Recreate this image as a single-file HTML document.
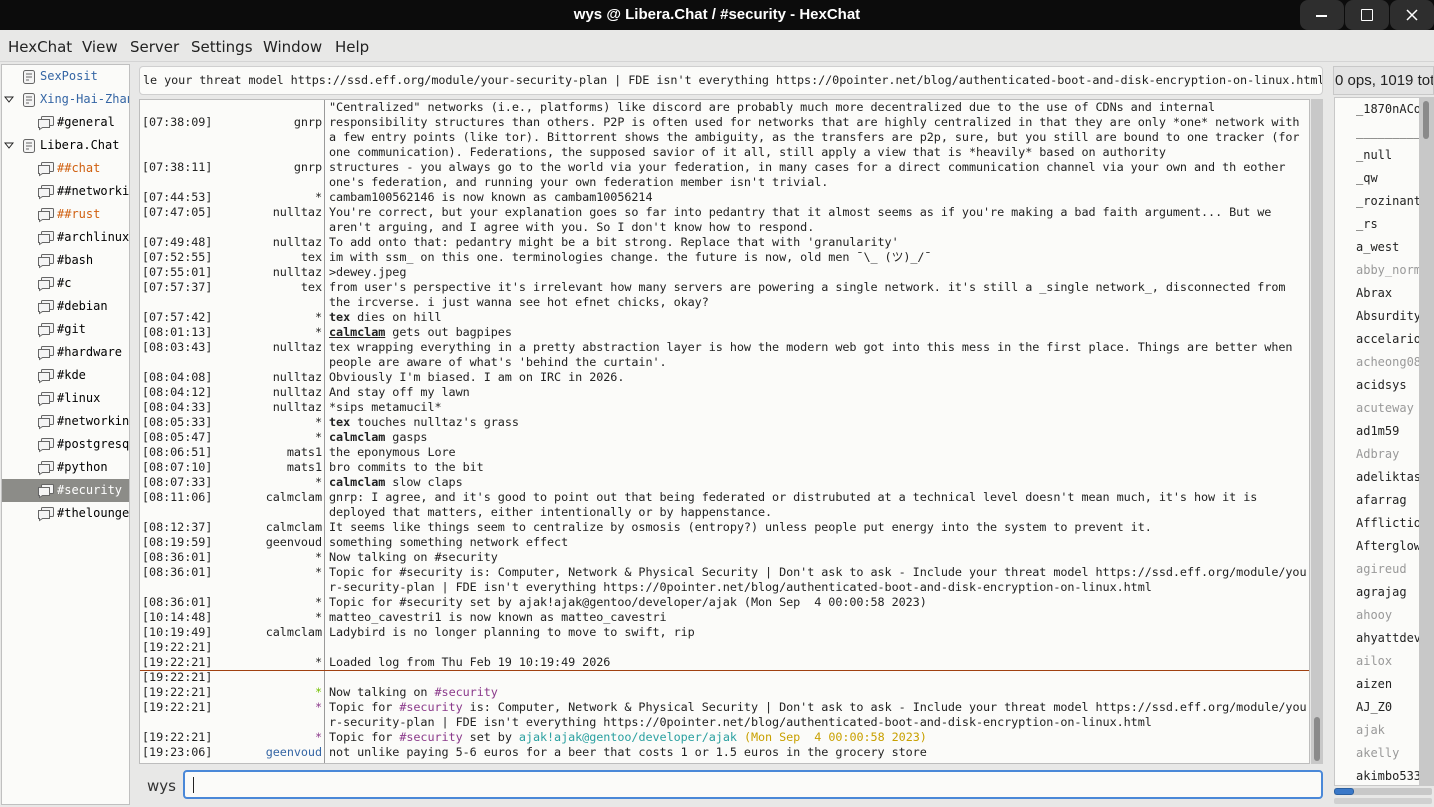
<!DOCTYPE html>
<html><head><meta charset="utf-8">
<style>
*{box-sizing:border-box;margin:0;padding:0}
body{width:1434px;height:807px;overflow:hidden;background:#e8e8e7;font-family:"DejaVu Sans","Liberation Sans",sans-serif;position:relative}
.title{position:absolute;left:0;top:0;width:1434px;height:30px;background:#0c0c0c;color:#fff;font-weight:bold;font-size:15px;text-align:center;line-height:30px;font-family:"Liberation Sans",sans-serif}
.wb{position:absolute;top:0;width:44px;height:30px;background:#2e2e2e;border-radius:8px}
.menu{position:absolute;top:30px;left:0;width:1434px;height:32px;font-size:15px;color:#222;border-bottom:1px solid #d4d4d4}
.menu span{position:absolute;top:8px}
.tree{position:absolute;left:1px;top:64px;width:129px;height:741px;background:#fbfbf9;border:1px solid #c0c0c0;font-size:12.5px;overflow:hidden}
.ti{position:absolute;height:23px;line-height:23px;white-space:nowrap;font-family:"DejaVu Sans Mono",monospace;font-size:12px}
.ti svg{position:absolute;top:4px}
.topic{position:absolute;left:139px;top:66px;width:1184px;height:29px;background:#fbfbf9;border:1px solid #cfcfcf;border-radius:4px;font-family:"DejaVu Sans Mono",monospace;font-size:11.8px;letter-spacing:-0.07px;line-height:27px;padding-left:3px;white-space:pre;overflow:hidden;color:#222}
.chat{position:absolute;left:139px;top:99px;width:1171px;height:665px;background:#fbfbf9;border:1px solid #bdbdbd;overflow:hidden;font-family:"DejaVu Sans Mono",monospace;font-size:11.8px;letter-spacing:-0.07px;color:#222}
.sep{position:absolute;left:184px;top:0;width:1px;height:665px;background:#9a9a9a}
.r{position:absolute;left:0;height:15px;line-height:15px;width:1170px;white-space:pre}
.r .t{position:absolute;left:2px}
.r .n{position:absolute;right:988px;text-align:right}
.r .m{position:absolute;left:189px}
.vs{position:absolute;left:1311px;top:99px;width:12px;height:665px;background:#c8c8c8}
.vs i{position:absolute;left:3px;top:618px;width:6px;height:44px;background:#8a8a8a;border-radius:3px}
.ops{position:absolute;left:1333px;top:66px;width:101px;height:29px;border:1px solid #c8c8c8;background:#e3e3e3;font-size:15px;line-height:27px;padding-left:1px;white-space:nowrap;overflow:hidden;color:#222;font-family:"Liberation Sans",sans-serif}
.nl{position:absolute;left:1334px;top:97px;width:86px;height:689px;background:#fbfbf9;border:1px solid #c8c8c8;overflow:hidden;font-family:"DejaVu Sans Mono",monospace;font-size:12px}
.nl div{position:absolute;left:21px;height:23px;line-height:23px;white-space:nowrap;color:#222}
.nl .g{color:#999}
.ns{position:absolute;left:1420px;top:97px;width:14px;height:689px;background:#c8c8c8}
.ns i{position:absolute;left:3px;top:4px;width:6px;height:38px;background:#8a8a8a;border-radius:3px}
.hs{position:absolute;left:1334px;top:788px;width:98px;height:7px;background:#c8c8c8;border-radius:2px}
.hs i{position:absolute;left:0;top:0;width:20px;height:7px;background:#3a78c8;border-radius:3px;border:1px solid #2a5fa0}
.hs2{position:absolute;left:1334px;top:798px;width:98px;height:6px;background:#d0d0d0;border-radius:2px}
.wys{position:absolute;left:147px;top:777px;font-size:15px;color:#333}
.inp{position:absolute;left:183px;top:770px;width:1140px;height:29px;background:#fbfbf9;border:2px solid #4a88d8;border-radius:4px}
.inp i{position:absolute;left:8px;top:5px;width:1px;height:16px;background:#222}
b{font-weight:bold}
.p{color:#8b3a8b}.tl{color:#2aa0a0}.gd{color:#c8a000}.gr{color:#73c000}.bl{color:#3465a4}
</style></head><body>
<div class="title">wys @ Libera.Chat / #security - HexChat</div>
<div class="wb" style="left:1300px"><div style="position:absolute;left:16px;top:15px;width:11px;height:1.5px;background:#fff"></div></div>
<div class="wb" style="left:1345px"><div style="position:absolute;left:16px;top:9px;width:12px;height:12px;border:1.5px solid #fff;border-radius:1px"></div></div>
<div class="wb" style="left:1390px"><svg style="position:absolute;left:15px;top:8px" width="14" height="14"><path d="M2 2L12 12M12 2L2 12" stroke="#fff" stroke-width="1.5"/></svg></div>
<div class="menu"><span style="left:8px">HexChat</span><span style="left:82px">View</span><span style="left:130px">Server</span><span style="left:191px">Settings</span><span style="left:263px">Window</span><span style="left:335px">Help</span></div>

<div class="tree">
<div class="ti" style="left:0;top:0"><svg style="left:20px" width="14" height="16"><rect x="1.5" y="1.5" width="11" height="13" rx="2" fill="#f4f4f4" stroke="#666"/><path d="M4 5h6M4 8h6M4 11h3" stroke="#666"/></svg><span style="position:absolute;left:38px;color:#3465a4">SexPosit</span></div>
<div class="ti" style="left:0;top:23px"><svg style="left:2px;top:8px" width="10" height="7"><path d="M1 1L9 1L5 6Z" fill="none" stroke="#222"/></svg><svg style="left:20px" width="14" height="16"><rect x="1.5" y="1.5" width="11" height="13" rx="2" fill="#f4f4f4" stroke="#666"/><path d="M4 5h6M4 8h6M4 11h3" stroke="#666"/></svg><span style="position:absolute;left:38px;color:#3465a4">Xing-Hai-Zhang</span></div>
<div class="ti" style="left:0;top:46px"><svg style="left:35px" width="18" height="16"><rect x="4.5" y="1.5" width="12" height="9" rx="1" fill="#f4f4f4" stroke="#666"/><path d="M1.5 4.5h11v8h-7l-3 2v-2h-1z" fill="#f4f4f4" stroke="#666"/></svg><span style="position:absolute;left:55px">#general</span></div>
<div class="ti" style="left:0;top:69px"><svg style="left:2px;top:8px" width="10" height="7"><path d="M1 1L9 1L5 6Z" fill="none" stroke="#222"/></svg><svg style="left:20px" width="14" height="16"><rect x="1.5" y="1.5" width="11" height="13" rx="2" fill="#f4f4f4" stroke="#666"/><path d="M4 5h6M4 8h6M4 11h3" stroke="#666"/></svg><span style="position:absolute;left:38px">Libera.Chat</span></div>
<div id="chans"></div>
</div>

<div class="topic">le your threat model https://ssd.eff.org/module/your-security-plan | FDE isn't everything https://0pointer.net/blog/authenticated-boot-and-disk-encryption-on-linux.html</div>

<div class="chat">
<div class="sep"></div>
<div id="rows"></div>
<div style="position:absolute;left:0;top:570px;width:1171px;height:1px;background:#a04010"></div>
</div>
<div class="vs"><i></i></div>

<div class="ops">0 ops, 1019 total</div>
<div class="nl" id="nl"></div>
<div class="ns"><i></i></div>
<div class="hs"><i></i></div>
<div class="hs2"></div>

<div class="wys">wys</div>
<div class="inp"><i></i></div>

<script>
var chans=[["##chat","#d06010"],["##networking",""],["##rust","#d06010"],["#archlinux",""],["#bash",""],["#c",""],["#debian",""],["#git",""],["#hardware",""],["#kde",""],["#linux",""],["#networking",""],["#postgresql",""],["#python",""],["#security","sel"],["#thelounge",""]];
var h="";
chans.forEach(function(c,i){var top=92+i*23;var sel=c[1]=="sel";
h+='<div class="ti" style="left:0;top:'+top+'px;width:127px;'+(sel?'background:#8c8c88;color:#fff;':'')+'"><svg style="left:35px" width="18" height="16"><rect x="4.5" y="1.5" width="12" height="9" rx="1" fill="#f4f4f4" stroke="#666"/><path d="M1.5 4.5h11v8h-7l-3 2v-2h-1z" fill="#f4f4f4" stroke="#666"/></svg><span style="position:absolute;left:55px;'+(c[1]&&!sel?'color:'+c[1]:'')+'">'+c[0]+'</span></div>';});
document.getElementById('chans').innerHTML=h;
function e(s){return s.replace(/&/g,'&amp;').replace(/</g,'&lt;').replace(/>/g,'&gt;');}
var R=[
["","",'"Centralized" networks (i.e., platforms) like discord are probably much more decentralized due to the use of CDNs and internal'],
["[07:38:09]","gnrp","responsibility structures than others. P2P is often used for networks that are highly centralized in that they are only *one* network with"],
["","","a few entry points (like tor). Bittorrent shows the ambiguity, as the transfers are p2p, sure, but you still are bound to one tracker (for"],
["","","one communication). Federations, the supposed savior of it all, still apply a view that is *heavily* based on authority"],
["[07:38:11]","gnrp","structures - you always go to the world via your federation, in many cases for a direct communication channel via your own and th eother"],
["","","one's federation, and running your own federation member isn't trivial."],
["[07:44:53]","*","cambam100562146 is now known as cambam10056214"],
["[07:47:05]","nulltaz","You're correct, but your explanation goes so far into pedantry that it almost seems as if you're making a bad faith argument... But we"],
["","","aren't arguing, and I agree with you. So I don't know how to respond."],
["[07:49:48]","nulltaz","To add onto that: pedantry might be a bit strong. Replace that with 'granularity'"],
["[07:52:55]","tex","im with ssm_ on this one. terminologies change. the future is now, old men ¯\\_ (ツ)_/¯"],
["[07:55:01]","nulltaz",">dewey.jpeg"],
["[07:57:37]","tex","from user's perspective it's irrelevant how many servers are powering a single network. it's still a _single network_, disconnected from"],
["","","the ircverse. i just wanna see hot efnet chicks, okay?"],
["[07:57:42]","*","<b>tex</b> dies on hill",1],
["[08:01:13]","*","<b><u>calmclam</u></b> gets out bagpipes",1],
["[08:03:43]","nulltaz","tex wrapping everything in a pretty abstraction layer is how the modern web got into this mess in the first place. Things are better when"],
["","","people are aware of what's 'behind the curtain'."],
["[08:04:08]","nulltaz","Obviously I'm biased. I am on IRC in 2026."],
["[08:04:12]","nulltaz","And stay off my lawn"],
["[08:04:33]","nulltaz","*sips metamucil*"],
["[08:05:33]","*","<b>tex</b> touches nulltaz's grass",1],
["[08:05:47]","*","<b>calmclam</b> gasps",1],
["[08:06:51]","mats1","the eponymous Lore"],
["[08:07:10]","mats1","bro commits to the bit"],
["[08:07:33]","*","<b>calmclam</b> slow claps",1],
["[08:11:06]","calmclam","gnrp: I agree, and it's good to point out that being federated or distrubuted at a technical level doesn't mean much, it's how it is"],
["","","deployed that matters, either intentionally or by happenstance."],
["[08:12:37]","calmclam","It seems like things seem to centralize by osmosis (entropy?) unless people put energy into the system to prevent it."],
["[08:19:59]","geenvoud","something something network effect"],
["[08:36:01]","*","Now talking on #security"],
["[08:36:01]","*","Topic for #security is: Computer, Network &amp; Physical Security | Don't ask to ask - Include your threat model https://ssd.eff.org/module/you",1],
["","","r-security-plan | FDE isn't everything https://0pointer.net/blog/authenticated-boot-and-disk-encryption-on-linux.html"],
["[08:36:01]","*","Topic for #security set by ajak!ajak@gentoo/developer/ajak (Mon Sep  4 00:00:58 2023)"],
["[10:14:48]","*","matteo_cavestri1 is now known as matteo_cavestri"],
["[10:19:49]","calmclam","Ladybird is no longer planning to move to swift, rip"],
["[19:22:21]","",""],
["[19:22:21]","*","Loaded log from Thu Feb 19 10:19:49 2026"],
["[19:22:21]","",""],
["[19:22:21]",'<span class="gr">*</span>','Now talking on <span class="p">#security</span>',1],
["[19:22:21]",'<span class="p">*</span>','Topic for <span class="p">#security</span> is: Computer, Network &amp; Physical Security | Don\'t ask to ask - Include your threat model https://ssd.eff.org/module/you',1],
["","","r-security-plan | FDE isn't everything https://0pointer.net/blog/authenticated-boot-and-disk-encryption-on-linux.html"],
["[19:22:21]",'<span class="p">*</span>','Topic for <span class="p">#security</span> set by <span class="tl">ajak!ajak@gentoo/developer/ajak</span> <span class="gd">(Mon Sep  4 00:00:58 2023)</span>',1],
["[19:23:06]",'<span class="bl">geenvoud</span>',"not unlike paying 5-6 euros for a beer that costs 1 or 1.5 euros in the grocery store"]
];
var o="";
R.forEach(function(r,i){var m=r[3]?r[2]:e(r[2]);var n=r[3]||r[1].indexOf('<')==0?r[1]:e(r[1]);
o+='<div class="r" style="top:'+i*15+'px"><span class="t">'+r[0]+'</span><span class="n">'+n+'</span><span class="m">'+m+'</span></div>';});
document.getElementById('rows').innerHTML=o;
var N=["_1870nACo","__________","_null","_qw","_rozinant","_rs","a_west","g:abby_norm","Abrax","Absurdity","accelario","g:acheong08","acidsys","g:acuteway","ad1m59","g:Adbray","adeliktas","afarrag","Afflictio","Afterglow","g:agireud","agrajag","g:ahooy","ahyattdev","g:ailox","aizen","AJ_Z0","g:ajak","g:akelly","akimbo533"];
var q="";N.forEach(function(x,i){var g=x.indexOf("g:")==0;if(g)x=x.slice(2);q+='<div class="'+(g?'g':'')+'" style="top:'+(i*23)+'px">'+x+'</div>';});
document.getElementById('nl').innerHTML=q;
</script>
</body></html>
